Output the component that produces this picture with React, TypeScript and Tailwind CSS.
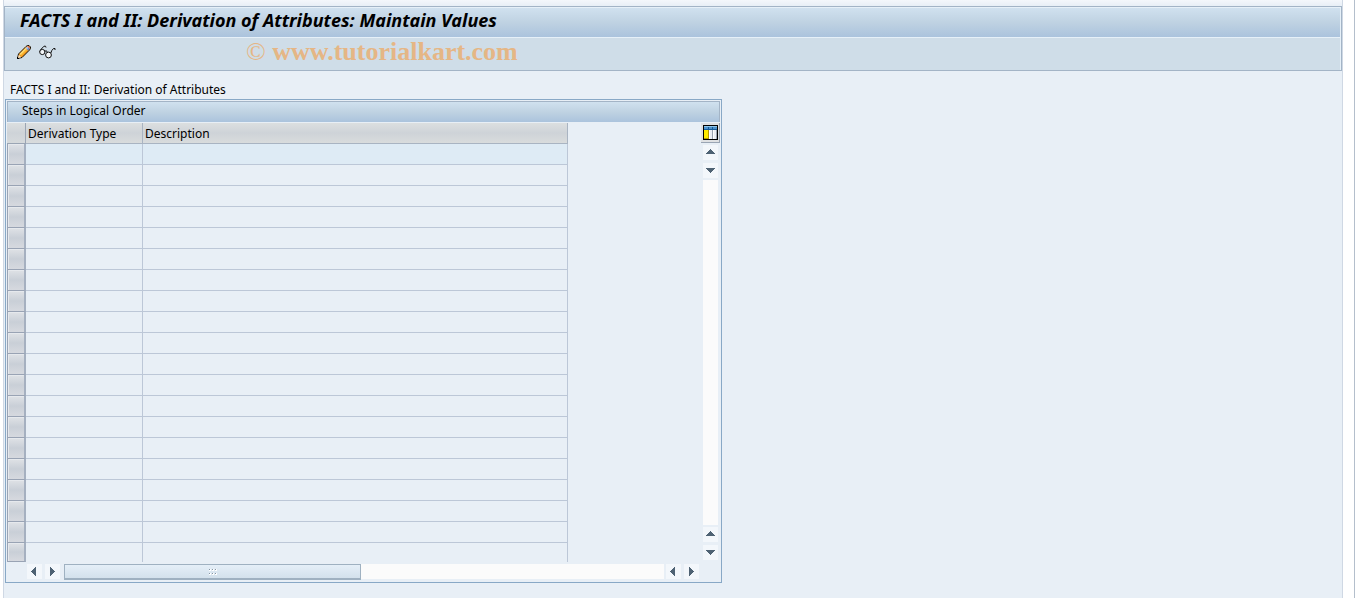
import React from 'react';

const ROWS = Array.from({ length: 20 }, (_, i) => i);

type Direction = 'up' | 'down' | 'left' | 'right';

const ARROWS: Record<Direction, string> = {
  up: 'M7 4h1v1h1v1h1v1h1v1h1v1H3V8h1V7h1V6h1V5h1z',
  down: 'M3 5h9v1h-1v1h-1v1H9v1H8v1H7V9H6V8H5V7H4V6H3z',
  left: 'M9 3v9H8v-1H7v-1H6V9H5V8H4V7h1V6h1V5h1V4h1V3z',
  right: 'M5 3v9h1v-1h1v-1h1V9h1V8h1V7H9V6H8V5H7V4H6V3z',
};

const ArrowButton: React.FC<{ direction: Direction; label: string }> = ({ direction, label }) => (
  <button type="button" aria-label={label} className="block h-[15px] w-[15px] shrink-0 bg-[#f3f7fb]">
    <svg width="15" height="15" viewBox="0 0 15 15" shapeRendering="crispEdges">
      <path d={ARROWS[direction]} fill="#4e6273" />
    </svg>
  </button>
);

const PencilIcon = () => (
  <svg width="14" height="14" viewBox="0 0 14 14">
    <path d="M.5 13.500l1-4.500L9 1.500 10.500.5h1.500l1.500 1.500v1.500L12.500 5 5 12.500z" fill="#f59a1b" stroke="#1a1208" strokeWidth="1" />
    <path d="M2.500 9L9 2.500l1 1L3.500 10z" fill="#ffe27a" />
    <path d="M3.500 10L10 3.500l.8.800L4.300 10.800z" fill="#fbbd3c" />
    <path d="M8.500 3l1.700-1.700 2.500 2.500L11 5.500z" fill="#a9bfe6" />
    <path d="M10 4.500l1.800-1.700 1 1L11 5.500z" fill="#5c7fc6" />
    <path d="M10.300 1.200h1.400l1.100 1.100v1.400z" fill="#e0606c" />
    <path d="M1.800 9.800l2.400 2.400-3.200.8z" fill="#f6e3c8" />
    <path d="M0 12h1v1h1v1H0z" fill="#000" />
  </svg>
);

const GlassesIcon = () => (
  <svg width="17" height="14" viewBox="0 0 17 14" fill="none" stroke="#111" strokeWidth="1">
    <path d="M.8 7l1-2.500L5 1.200h1.500L7 2.500" />
    <circle cx="3.300" cy="7" r="2.600" fill="#f4f7fa" />
    <path d="M5.800 6.200l1.700-.4.800 1.400" />
    <circle cx="9.500" cy="10" r="2.900" fill="#f4f7fa" />
    <path d="M11.800 8l1-2.500 1.700-2h1.500v1.500" />
  </svg>
);

const TableSettingsIcon = () => (
  <svg width="15" height="15" viewBox="0 0 15 15" shapeRendering="crispEdges">
    <path d="M0 0h15v15H0z" fill="#000" />
    <path d="M1 1h13v13H1z" fill="#fff" />
    <path d="M1 1h13v1H1z" fill="#8fc6ec" />
    <path d="M1 2h13v2H1z" fill="#4f93cc" />
    <path d="M1 4h13v1H1z" fill="#145c9c" />
    <path d="M1 5h4v8H1z" fill="#ffec00" />
    <path d="M1 13h4v1H1zM5 5h1v9H5z" fill="#b59a00" />
    <path d="M9 5h1v9H9zM13 5h1v9h-1z" fill="#9aa2b0" />
    <path d="M7 5h2v9H7zM11 5h2v9h-2z" fill="#eceef4" />
    <path d="M5 2h1v2H5zM9 2h1v2H9z" fill="#145c9c" />
  </svg>
);

const GripIcon = () => (
  <svg width="8" height="6" viewBox="0 0 8 6" shapeRendering="crispEdges">
    <path d="M0 0h2v2H0zM3 0h2v2H3zM6 0h2v2H6zM0 4h2v2H0zM3 4h2v2H3zM6 4h2v2H6z" fill="#fff" />
    <path d="M0 0h1v1H0zM3 0h1v1H3zM6 0h1v1H6zM0 4h1v1H0zM3 4h1v1H3zM6 4h1v1H6z" fill="#8796a4" />
  </svg>
);

const PageHeader: React.FC = () => (
  <header className="border border-[#a3b4c6]">
    <div className="flex h-[31px] items-center border-t border-r border-b border-[#e6f0f8] bg-linear-to-b from-[#d0e1ef] via-[#bfd2e2] to-[#abc3dd] pb-1.5 pl-[15px]">
      <h1 className="text-[18px] leading-5 font-bold italic">FACTS I and II: Derivation of Attributes: Maintain Values</h1>
    </div>
    <div className="flex h-8 items-center border-r border-[#e6f0f8] bg-[#cfdde8] pb-1 pl-3">
      <button type="button" aria-label="Change">
        <PencilIcon />
      </button>
      <button type="button" aria-label="Display" className="ml-2">
        <GlassesIcon />
      </button>
      <span className="ml-[190px] font-['Liberation_Serif',serif] text-[26px] leading-7 font-bold whitespace-nowrap text-[#e5b685]">
        <span className="font-normal">©</span> www.tutorialkart.com
      </span>
    </div>
  </header>
);

const StepsTable: React.FC = () => (
  <table className="w-[561px] table-fixed border-separate border-spacing-0">
    <colgroup>
      <col className="w-[19px]" />
      <col className="w-[117px]" />
      <col className="w-[425px]" />
    </colgroup>
    <thead>
      <tr className="h-[21px] text-left">
        <th aria-label="Select" className="border-r border-b border-[#9aa5b4] bg-linear-to-b from-[#dcdfe0] via-[#ced3d8] to-[#d6dadc] p-0"></th>
        <th scope="col" className="border-r border-b border-[#a9b4c2] bg-linear-to-b from-[#dcdfe0] via-[#ced3d8] to-[#d9dcdd] p-0 pt-[2px] pl-[2px] leading-[18px] font-normal">
          Derivation Type
        </th>
        <th scope="col" className="border-r border-b border-[#a9b4c2] bg-linear-to-b from-[#dcdfe0] via-[#ced3d8] to-[#d9dcdd] p-0 pt-[2px] pl-[2px] leading-[18px] font-normal">
          Description
        </th>
      </tr>
    </thead>
    <tbody>
      {ROWS.map((row) => (
        <tr key={row} className="group h-[21px] last:h-[19px]">
          <td className="border-r-2 border-b border-l border-[#99a3b4] border-r-[#a5b0c0] bg-linear-to-b from-[#dfe2e6] via-[#c9cfd7] to-[#d6d9df] p-0 shadow-[inset_1px_1px_0_#e6e9ed]"></td>
          <td className="border-r border-b border-[#bcc7d7] p-0 group-first:bg-[#deebf5] group-last:border-b-0"></td>
          <td className="border-r border-b border-[#bcc7d7] p-0 group-first:bg-[#deebf5] group-last:border-b-0"></td>
        </tr>
      ))}
    </tbody>
  </table>
);

const VerticalScroll: React.FC = () => (
  <div className="flex w-[19px] flex-col">
    <button type="button" aria-label="Configure columns" className="flex h-5 shrink-0 items-center justify-center border-r border-b border-[#9aa5b4] bg-[#dfe1e3]">
      <TableSettingsIcon />
    </button>
    <div className="flex grow flex-col gap-[2px] py-[2px] pl-[2px]">
      <div className="flex flex-col gap-[3px]">
        <ArrowButton direction="up" label="Scroll up" />
        <ArrowButton direction="down" label="Scroll down" />
      </div>
      <div className="w-[15px] grow bg-[#fbfbfb]"></div>
      <div className="flex flex-col gap-[3px]">
        <ArrowButton direction="up" label="Previous page" />
        <ArrowButton direction="down" label="Next page" />
      </div>
    </div>
  </div>
);

const HorizontalScroll: React.FC = () => (
  <div className="mt-[2px] flex items-start pr-[21px] pl-5">
    <div className="flex gap-[3px]">
      <ArrowButton direction="left" label="Scroll left" />
      <ArrowButton direction="right" label="Scroll right" />
    </div>
    <div className="mr-[2px] ml-1 h-[15px] grow bg-[#fbfbfb]">
      <div className="flex h-4 w-[297px] items-center justify-center border border-b-2 border-[#9fb1c1] bg-linear-to-b from-[#e5eff8] to-[#d3e1ec]">
        <GripIcon />
      </div>
    </div>
    <div className="flex gap-[3px]">
      <ArrowButton direction="left" label="Previous columns" />
      <ArrowButton direction="right" label="Next columns" />
    </div>
  </div>
);

const StepsPanel: React.FC = () => (
  <section className="ml-px w-[717px] border border-[#88a8c6] p-px pb-[3px]">
    <h2 className="h-[21px] border border-b-0 border-[#a3b4c6] bg-linear-to-b from-[#d0e1ef] via-[#bfd2e2] to-[#abc3dd] pl-[14px] leading-[18px]">
      Steps in Logical Order
    </h2>
    <div className="mt-px flex justify-between">
      <StepsTable />
      <VerticalScroll />
    </div>
    <HorizontalScroll />
  </section>
);

const App: React.FC = () => (
  <div className="flex min-h-screen bg-white font-['Noto_Sans',sans-serif] text-[12px] text-black">
    <div className="ml-[3px] grow border-x border-[#cfd8e4] bg-[#e8eff6]">
      <div className="h-1.5 bg-linear-to-b from-[#f4f7fb] to-[#e8eff6]"></div>
      <PageHeader />
      <p className="mt-[10px] pl-1.5 leading-[18px]">FACTS I and II: Derivation of Attributes</p>
      <StepsPanel />
    </div>
    <div className="mr-px w-3 shrink-0 border-r border-[#b4bfcc] bg-white"></div>
  </div>
);

export default App;
